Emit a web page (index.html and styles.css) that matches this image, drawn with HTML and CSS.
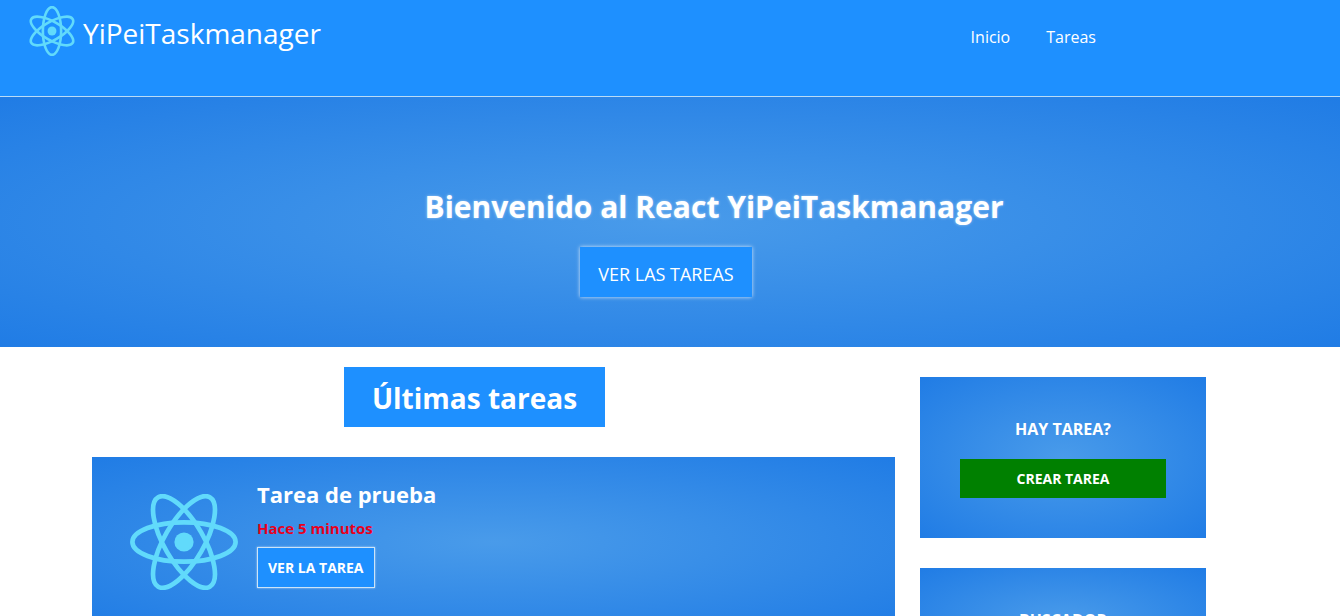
FILE: index.html
```html
<!DOCTYPE html>
<html lang="es">
<head>
  <meta charset="utf-8">
  <meta name="viewport" content="width=device-width, initial-scale=1">
  <title>YiPeiTaskmanager</title>
  <link rel="stylesheet" href="styles.css">
</head>
<body>
  <header class="header">
    <a class="brand" href="#">
      <svg class="brand-logo" viewBox="-10.23 -11.5 20.46 23" aria-hidden="true">
        <circle r="2.05" fill="#61dafb"/>
        <g fill="none" stroke="#61dafb" stroke-width="1.2" transform="rotate(90)">
          <ellipse rx="11" ry="4.2"/>
          <ellipse rx="11" ry="4.2" transform="rotate(60)"/>
          <ellipse rx="11" ry="4.2" transform="rotate(120)"/>
        </g>
      </svg>
      <span class="brand-name">YiPeiTaskmanager</span>
    </a>
    <nav class="menu">
      <a href="#">Inicio</a>
      <a href="#">Tareas</a>
    </nav>
  </header>

  <section class="hero gradient">
    <h1 class="hero-title">Bienvenido al React YiPeiTaskmanager</h1>
    <a class="hero-button" href="#">VER LAS TAREAS</a>
  </section>

  <div class="layout">
    <main class="content">
      <h2 class="subheader">Últimas tareas</h2>
      <article class="task gradient">
        <svg class="task-image" viewBox="-11.5 -10.23 23 20.46" aria-hidden="true">
          <circle r="2.05" fill="#61dafb"/>
          <g fill="none" stroke="#61dafb">
            <ellipse rx="11" ry="4.2"/>
            <ellipse rx="11" ry="4.2" transform="rotate(60)"/>
            <ellipse rx="11" ry="4.2" transform="rotate(120)"/>
          </g>
        </svg>
        <div class="task-body">
          <h2 class="task-title">Tarea de prueba</h2>
          <span class="task-date">Hace 5 minutos</span>
          <a class="task-link" href="#">VER LA TAREA</a>
        </div>
      </article>
    </main>

    <aside class="sidebar">
      <section class="widget gradient">
        <h3 class="widget-title">HAY TAREA?</h3>
        <a class="widget-button" href="#">CREAR TAREA</a>
      </section>
      <section class="widget gradient">
        <h3 class="widget-title">BUSCADOR</h3>
      </section>
    </aside>
  </div>
</body>
</html>
```

FILE: styles.css
```css
* {
  box-sizing: border-box;
}

body {
  margin: 0;
  background: #fff;
  color: #fff;
  font-family: "Open Sans", "Noto Sans", sans-serif;
}

h1, h2, h3 {
  margin: 0;
}

a {
  color: #fff;
  text-decoration: none;
}

.gradient {
  background: radial-gradient(ellipse at center, #499bea 0%, #207ce5 100%);
}

.header {
  display: flex;
  justify-content: space-between;
  align-items: flex-start;
  padding: 6px 244px 36px 29px;
  background: #1e90ff;
  border-bottom: 1px solid #b9dcf8;
}

.brand {
  display: flex;
  align-items: flex-start;
  gap: 8px;
}

.brand-logo {
  width: 46px;
  height: 50px;
}

.brand-name {
  font-size: 28px;
  line-height: 54px;
}

.menu {
  display: flex;
  gap: 36px;
  padding-top: 19px;
  font-size: 16px;
  line-height: 24px;
}

.hero {
  display: flex;
  flex-direction: column;
  align-items: center;
  padding: 86px 8px 50px 0;
}

.hero-title {
  padding-left: 96px;
  font-size: 30px;
  line-height: 48px;
  text-shadow: 0 0 3px rgba(255, 255, 255, 0.5);
}

.hero-button {
  margin-top: 16px;
  padding: 15px 18px 11px;
  background: #1e90ff;
  box-shadow: 0 0 4px rgba(255, 255, 255, 0.8);
  font-size: 18px;
  line-height: 24px;
}

.layout {
  display: grid;
  grid-template-columns: 803fr 286fr;
  gap: 25px;
  padding: 20px 134px 20px 92px;
}

.content {
  display: flex;
  flex-direction: column;
  align-items: center;
  gap: 30px;
}

.subheader {
  margin-right: 38px;
  padding: 11px 28px 9px;
  background: #1e90ff;
  font-size: 28px;
  line-height: 40px;
}

.task {
  display: flex;
  align-self: stretch;
  align-items: flex-start;
  gap: 19px;
  padding: 19px 38px 37px;
}

.task-image {
  width: 108px;
  height: 96px;
  margin-top: 18px;
}

.task-body {
  display: flex;
  flex-direction: column;
  align-items: flex-start;
}

.task-title {
  font-size: 22px;
  line-height: 36px;
}

.task-date {
  margin-top: 6px;
  color: #e8001c;
  font-size: 15px;
  font-weight: 700;
  line-height: 20px;
}

.task-link {
  margin-top: 9px;
  padding: 10px;
  background: #1e90ff;
  border: 1px solid #cce4f8;
  box-shadow: 0 0 2px rgba(255, 255, 255, 0.6);
  font-size: 14px;
  font-weight: 700;
  line-height: 19px;
}

.sidebar {
  display: flex;
  flex-direction: column;
  gap: 30px;
  padding-top: 10px;
}

.widget {
  padding: 40px;
  text-align: center;
}

.widget-title {
  font-size: 16px;
  line-height: 24px;
}

.widget-button {
  display: block;
  margin-top: 18px;
  padding: 10px;
  background: #008000;
  font-size: 14px;
  font-weight: 700;
  line-height: 19px;
}
```
